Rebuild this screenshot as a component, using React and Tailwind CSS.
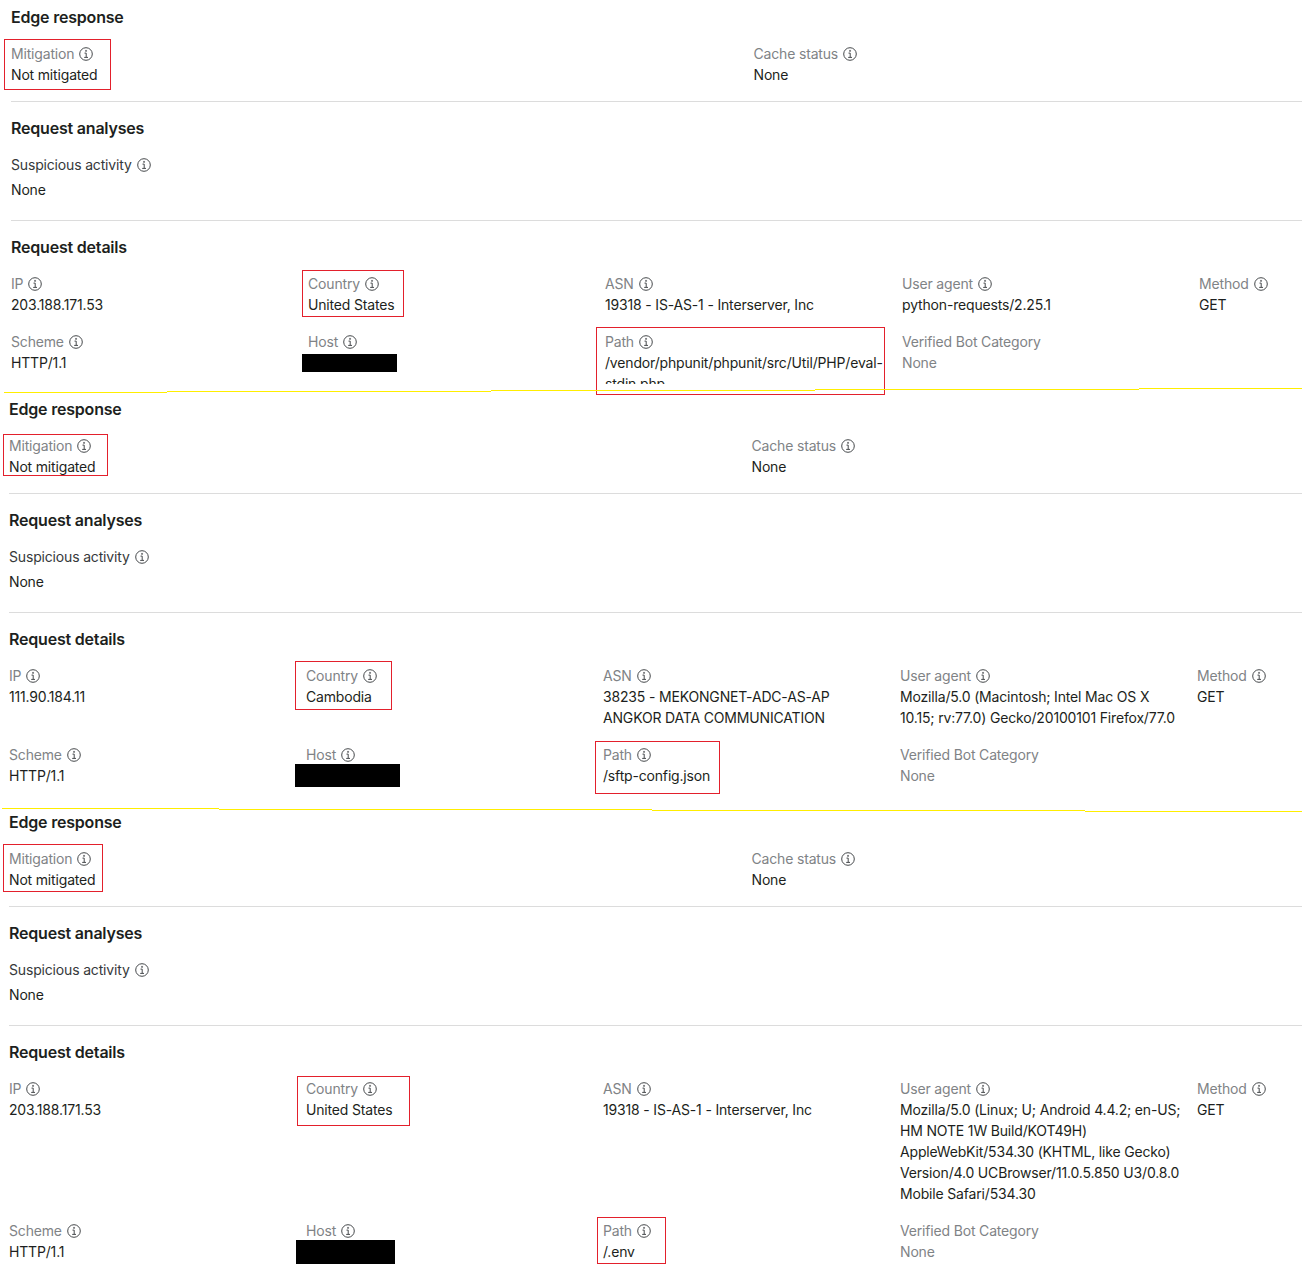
const font = { fontFamily: 'Inter, sans-serif' }

function InfoIcon() {
  return (
    <svg viewBox="0 0 14 14" fill="none" stroke="currentColor" className="ml-[5px] h-[14px] w-[14px] shrink-0 text-[#46494c]">
      <circle cx="7" cy="7" r="6.3" strokeWidth="1" />
      <path d="M5.5 6.1H7.2V10.2M5.2 10.4H9" strokeWidth="1" />
      <path d="M6.5 3.3H7.6V4.4H6.5Z" fill="currentColor" strokeWidth="0.4" />
    </svg>
  )
}

function Field({ label, children, muted, box, redact, clip, noHint }) {
  return (
    <div className="relative min-w-0">
      <div className="flex h-[21px] items-center text-[#7f8386]">
        {label}
        {!noHint && <InfoIcon />}
      </div>
      <div className={`${muted ? 'text-[#7f8386]' : 'text-[#1d1f20]'} ${clip ? 'h-[32px] overflow-hidden' : ''} min-h-[21px] break-words`}>
        {children}
      </div>
      {redact && <div className={`absolute bg-black ${redact}`} />}
      {box && <div className={`absolute z-10 border border-[#e3202c] ${box}`} />}
    </div>
  )
}

function Title({ children }) {
  return <h2 className="h-6 text-base leading-6 font-semibold tracking-[-0.2px] text-[#1d1f20]">{children}</h2>
}

function Panel({ data, className }) {
  return (
    <section className={`w-[1469px] pt-[5px] text-sm leading-[21px] tracking-[-0.17px] ${className}`}>
      <Title>Edge response</Title>
      <div className="mt-[14px] mb-4 grid grid-cols-2 gap-4">
        <Field label="Mitigation" box={data.mitigationBox}>Not mitigated</Field>
        <Field label="Cache status">None</Field>
      </div>
      <hr className="border-[#dcdcdc]" />

      <div className="mt-[14px]">
        <Title>Request analyses</Title>
        <div className="mt-[14px] flex h-[21px] items-center text-[#36393a]">
          Suspicious activity
          <InfoIcon />
        </div>
        <div className="mt-1 mb-5 text-[#1d1f20]">None</div>
      </div>
      <hr className="border-[#dcdcdc]" />

      <div className="mt-[14px]">
        <Title>Request details</Title>
        <div className="mt-[14px] grid grid-cols-5 gap-4">
          <Field label="IP">{data.ip}</Field>
          <Field label="Country" box={data.countryBox}>{data.country}</Field>
          <Field label="ASN">{data.asn}</Field>
          <Field label="User agent">{data.agent}</Field>
          <Field label="Method">GET</Field>
          <Field label="Scheme">HTTP/1.1</Field>
          <Field label="Host" redact={data.hostRedact} />
          <Field label="Path" box={data.pathBox} clip={data.clipPath}>{data.path}</Field>
          <Field label="Verified Bot Category" muted noHint>None</Field>
        </div>
      </div>
    </section>
  )
}

const panels = [
  {
    className: 'ml-[11px] pb-2',
    mitigationBox: '-left-[7px] -top-[4px] h-[51px] w-[107px]',
    countryBox: '-left-[6px] -top-[3px] h-[47px] w-[102px]',
    pathBox: '-left-[9px] -top-[4px] h-[68px] w-[289px]',
    hostRedact: '-left-[6px] top-[23px] h-[18px] w-[95px]',
    clipPath: true,
    ip: '203.188.171.53',
    country: 'United States',
    asn: '19318 - IS-AS-1 - Interserver, Inc',
    agent: 'python-requests/2.25.1',
    path: '/vendor/phpunit/phpunit/src/Util/PHP/eval-stdin.php',
  },
  {
    className: 'ml-[9px] pb-[19px]',
    mitigationBox: '-left-[6px] -top-[1px] h-[42px] w-[105px]',
    countryBox: '-left-[11px] -top-[4px] h-[49px] w-[97px]',
    pathBox: '-left-[8px] -top-[3px] h-[53px] w-[125px]',
    hostRedact: '-left-[11px] top-[20px] h-[23px] w-[105px]',
    ip: '111.90.184.11',
    country: 'Cambodia',
    asn: '38235 - MEKONGNET-ADC-AS-AP ANGKOR DATA COMMUNICATION',
    agent: 'Mozilla/5.0 (Macintosh; Intel Mac OS X 10.15; rv:77.0) Gecko/20100101 Firefox/77.0',
    path: '/sftp-config.json',
  },
  {
    className: 'ml-[9px] pb-[19px]',
    mitigationBox: '-left-[6px] -top-[4px] h-[48px] w-[100px]',
    countryBox: '-left-[9px] -top-[2px] h-[50px] w-[113px]',
    pathBox: '-left-[6px] -top-[3px] h-[47px] w-[69px]',
    hostRedact: '-left-[10px] top-[20px] h-[24px] w-[99px]',
    ip: '203.188.171.53',
    country: 'United States',
    asn: '19318 - IS-AS-1 - Interserver, Inc',
    agent: 'Mozilla/5.0 (Linux; U; Android 4.4.2; en-US; HM NOTE 1W Build/KOT49H) AppleWebKit/534.30 (KHTML, like Gecko) Version/4.0 UCBrowser/11.0.5.850 U3/0.8.0 Mobile Safari/534.30',
    path: '/.env',
  },
]

// hand-drawn yellow separators, slightly slanted so they step by a pixel
const strokes = [
  [4, 392, 163], [167, 391, 324], [491, 390, 324], [815, 389, 324], [1139, 388, 163],
  [2, 808, 217], [219, 809, 433], [652, 810, 433], [1085, 811, 217],
]

export default function App() {
  return (
    <div className="relative h-[1283px] w-[1302px] overflow-hidden bg-white" style={font}>
      {panels.map((p, i) => (
        <Panel key={i} data={p} className={p.className} />
      ))}
      <svg width="1302" height="1283" className="pointer-events-none absolute top-0 left-0 z-20">
        {strokes.map(([x, y, w]) => (
          <rect key={x + '-' + y} x={x} y={y} width={w} height="1" fill="#ffee00" />
        ))}
      </svg>
    </div>
  )
}
